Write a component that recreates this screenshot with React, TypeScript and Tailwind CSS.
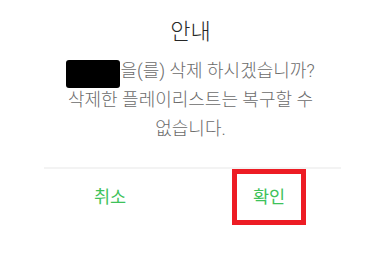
export default function App() {
  return (
    <div
      className="w-[385px] h-[280px] bg-white overflow-hidden"
      style={{ fontFamily: 'Roboto, "Noto Sans CJK KR", "Noto Sans", sans-serif' }}
    >
      <div className="flex flex-col items-center pt-[16px] pr-[4px]">
        <h1 className="text-[22px] leading-[32px] text-[#262626] font-light">안내</h1>
        <p className="mt-[8px] w-[266px] text-center text-[18px] leading-[29px] text-[#6b6b6b] break-keep font-light">
          <span className="relative top-[3px] inline-block w-[54px] h-[28px] bg-black rounded-[3px] align-[-8px]" />
          을(를) 삭제 하시겠습니까? 삭제한 플레이리스트는 복구할 수 없습니다.
        </p>
      </div>

      <div className="mx-[44px] mt-[24px] h-[2px] bg-[#f3f3f3]" />

      <div className="flex justify-between pl-[73px] pr-[79px]">
        <button className="w-[74px] h-[56px] flex items-center justify-center text-[17.5px] text-[#3ec25a]">
          취소
        </button>
        <button className="w-[74px] h-[56px] flex items-center justify-center border-[5px] border-[#ed1c24] text-[17.5px] text-[#3ec25a]">
          확인
        </button>
      </div>
    </div>
  );
}
